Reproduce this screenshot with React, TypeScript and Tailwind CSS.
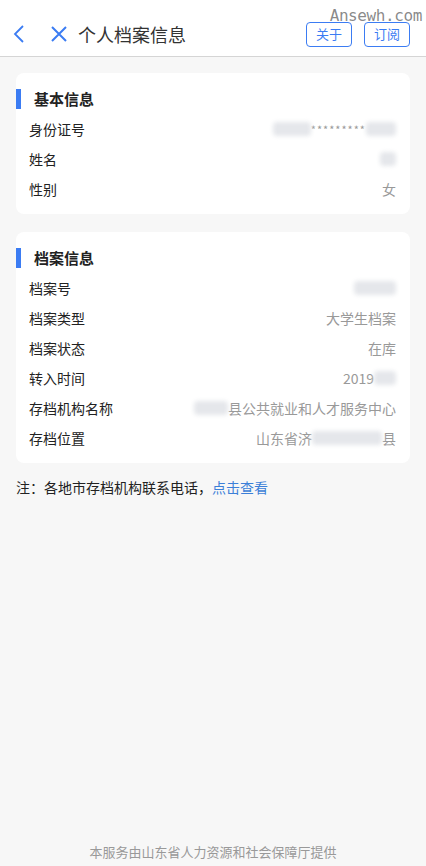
import React from 'react';

const font = { fontFamily: '"Noto Sans CJK SC", "Noto Sans", sans-serif' };

const Blur: React.FC<{ w: string }> = ({ w }) => (
  <span className={`inline-block h-[14px] ${w} bg-gray-200 blur-[2px] rounded-sm align-middle`} />
);

const Row: React.FC<{ label: string; children: React.ReactNode }> = ({ label, children }) => (
  <div className="flex items-center justify-between h-[30px] pl-[13px] pr-[14px]">
    <span className="text-[14px] text-[#222]">{label}</span>
    <span className="flex items-center text-[14px] text-[#999]">{children}</span>
  </div>
);

const Card: React.FC<{ title: string; children: React.ReactNode }> = ({ title, children }) => (
  <div className="bg-white rounded-lg pt-[16px] pb-[10px]">
    <div className="flex items-center h-[20px] mb-[5px]">
      <span className="w-[5px] h-[20px] bg-[#3b7cf3]" />
      <span className="ml-[13px] text-[15px] font-semibold text-[#222]">{title}</span>
    </div>
    {children}
  </div>
);

export default function App() {
  return (
    <div className="w-[426px] h-[866px] bg-[#f7f7f7] flex flex-col" style={font}>
      {/* Header */}
      <header className="relative h-[57px] bg-white border-b border-[#d5d5d5] flex items-center pt-[12px]">
        <button className="ml-[12px] text-[#3b7cf3]">
          <svg width="14" height="22" viewBox="0 0 14 22" fill="none" stroke="currentColor" strokeWidth="1.8">
            <path d="M11 3 L3 11 L11 19" />
          </svg>
        </button>
        <button className="ml-[24px] text-[#3b7cf3]">
          <svg width="18" height="18" viewBox="0 0 18 18" fill="none" stroke="currentColor" strokeWidth="2">
            <path d="M2 2 L16 16 M16 2 L2 16" />
          </svg>
        </button>
        <h1 className="ml-[10px] text-[18px] text-[#333]">个人档案信息</h1>
        <div className="ml-auto mr-[16px] flex gap-[12px]">
          <button className="w-[46px] h-[25px] border border-[#3b7cf3] rounded text-[13px] text-[#3b7cf3] flex items-center justify-center">关于</button>
          <button className="w-[46px] h-[25px] border border-[#3b7cf3] rounded text-[13px] text-[#3b7cf3] flex items-center justify-center">订阅</button>
        </div>
        {/* watermark */}
        <span className="absolute top-[4px] right-[4px] text-[16px] text-[#555]/70 tracking-tight" style={{ fontFamily: '"DejaVu Sans Mono", monospace' }}>Ansewh.com</span>
      </header>

      <main className="flex flex-col px-[16px] pt-[16px] gap-[18px]">
        <Card title="基本信息">
          <Row label="身份证号">
            <Blur w="w-[38px]" />
            <span className="text-[11px] tracking-[1px] text-[#999]">*********</span>
            <Blur w="w-[30px]" />
          </Row>
          <Row label="姓名">
            <Blur w="w-[16px]" />
          </Row>
          <Row label="性别">女</Row>
        </Card>

        <Card title="档案信息">
          <Row label="档案号">
            <Blur w="w-[42px]" />
          </Row>
          <Row label="档案类型">大学生档案</Row>
          <Row label="档案状态">在库</Row>
          <Row label="转入时间">
            2019
            <Blur w="w-[22px]" />
          </Row>
          <Row label="存档机构名称">
            <Blur w="w-[34px]" />
            县公共就业和人才服务中心
          </Row>
          <Row label="存档位置">
            山东省济
            <Blur w="w-[70px]" />
            县
          </Row>
        </Card>

        <p className="text-[14px] text-[#222] -mt-[4px]">
          注：各地市存档机构联系电话，
          <span className="text-[#3c7fd8]">点击查看</span>
        </p>
      </main>

      <footer className="mt-auto pb-[5px] text-center text-[13px] text-[#999]">
        本服务由山东省人力资源和社会保障厅提供
      </footer>
    </div>
  );
}
